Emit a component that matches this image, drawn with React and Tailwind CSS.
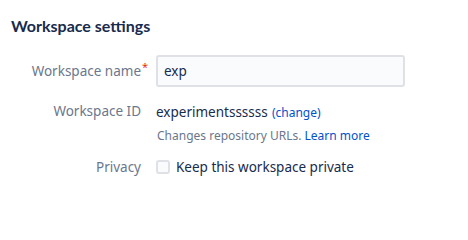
import React, { useState } from 'react';

const FONT = { fontFamily: '"Noto Sans", "Open Sans", sans-serif' };

function Row({ label, required, children, className = '' }) {
  return (
    <div className={`flex items-center ${className}`}>
      <label className="w-[130px] text-right text-[13.5px] text-[#6b778c] shrink-0">
        <span className="relative">
          {label}
          {required && <span className="absolute -right-[7px] -top-[3px] text-[#de350b] text-[11px]">*</span>}
        </span>
      </label>
      <div className="pl-[15px] flex-1">{children}</div>
    </div>
  );
}

export default function App() {
  const [name, setName] = useState('exp');
  const [priv, setPriv] = useState(false);

  return (
    <div className="w-[468px] h-[218px] bg-white px-[11px] pt-[16px]" style={FONT}>
      <h2 className="font-['Lato',sans-serif] text-[16px] font-bold text-[#172b4d] leading-[20px]">Workspace settings</h2>

      <div className="mt-[19px] pr-[52px]">
        <Row label="Workspace name" required>
          <input
            value={name}
            onChange={(e) => setName(e.target.value)}
            className="w-full h-[32px] rounded-[3px] border-2 border-[#dfe1e6] bg-[#fafbfc] px-[6px] text-[13.5px] text-[#172b4d] outline-none"
          />
        </Row>

        <Row label="Workspace ID" className="mt-[12px]">
          <span className="text-[13.5px] text-[#172b4d]">experimentssssss</span>{' '}
          <a href="#" className="text-[12px] text-[#0052cc]">(change)</a>
        </Row>
        <div className="pl-[146px] mt-[4px] text-[12px] text-[#6b778c]">
          Changes repository URLs. <a href="#" className="text-[#0052cc]">Learn more</a>
        </div>

        <Row label="Privacy" className="mt-[12px]">
          <label className="flex items-center gap-[6px] text-[13.5px] text-[#172b4d] cursor-pointer">
            <input
              type="checkbox"
              checked={priv}
              onChange={(e) => setPriv(e.target.checked)}
              className="appearance-none w-[14px] h-[14px] rounded-[3px] border-2 border-[#dfe1e6] bg-[#fafbfc] checked:bg-[#0052cc]"
            />
            Keep this workspace private
          </label>
        </Row>
      </div>
    </div>
  );
}
